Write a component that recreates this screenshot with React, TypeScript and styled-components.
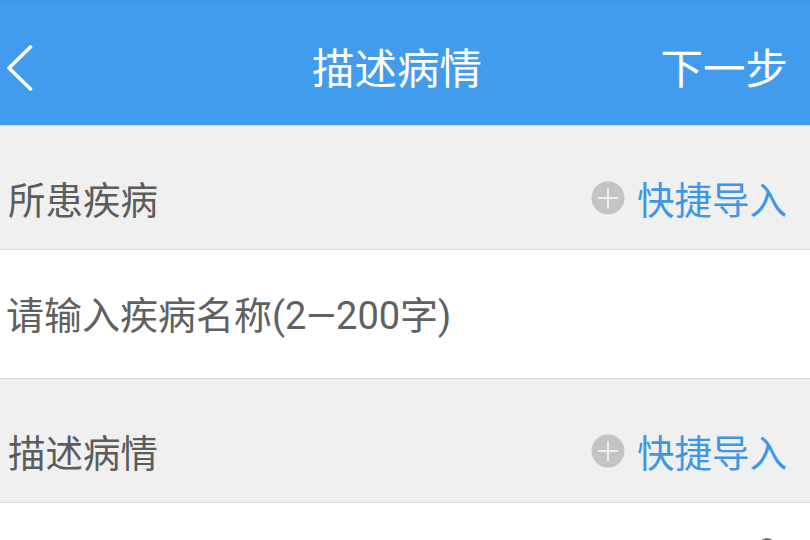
import React from "react";
import styled, { createGlobalStyle } from "styled-components";

const Global = createGlobalStyle`
  html, body { margin: 0; padding: 0; background: #fff; }
  body { font-family: Roboto, "Noto Sans CJK SC", "Liberation Sans", sans-serif; }
`;

const Page = styled.div`
  width: 810px;
  height: 540px;
  overflow: hidden;
  background: #fff;
`;

const Header = styled.header`
  height: 125px;
  box-sizing: border-box;
  padding: 20px 22px 0 6px;
  display: grid;
  grid-template-columns: 1fr auto 1fr;
  align-items: center;
  background: linear-gradient(#3f95e4 0, #429cee 8px);
  color: #fff;
`;

const BackIcon = styled.svg`
  width: 27px;
  height: 48px;
  display: block;
  margin-top: -10px;
`;

const Title = styled.h1`
  margin: -6px 0 0;
  font-size: 42.5px;
  line-height: 60px;
  font-weight: 400;
`;

const NextAction = styled.span`
  margin-top: -6px;
  justify-self: end;
  font-size: 42.5px;
  line-height: 60px;
`;

const SectionBar = styled.div`
  height: 125px;
  box-sizing: border-box;
  padding: 27px 23px 0 8px;
  display: flex;
  align-items: center;
  justify-content: space-between;
  background: #f0f0f1;
  border-top: 1px solid #dcdde0;
  border-bottom: 1px solid #dedede;
`;

const SectionTitle = styled.h2`
  margin: 0;
  font-size: 37.5px;
  line-height: 50px;
  font-weight: 400;
  color: #5c5c5c;
`;

const QuickImport = styled.span`
  display: flex;
  align-items: center;
  gap: 12px;
  font-size: 37.5px;
  line-height: 50px;
  color: #3f97e4;
`;

const PlusIcon = styled.svg`
  width: 34px;
  height: 34px;
  display: block;
  margin-top: -6px;
`;

const InputRow = styled.div`
  height: 128px;
  box-sizing: border-box;
  padding: 4px 6px 0;
  display: flex;
  align-items: center;
  font-size: 38px;
  line-height: 50px;
  color: #606060;
  background: #fff;
`;

const DescriptionArea = styled.div`
  height: 60px;
  box-sizing: border-box;
  padding: 35px 35px 0 0;
  display: flex;
  justify-content: flex-end;
  background: #fff;
`;

const Marker = styled.span`
  width: 16px;
  height: 16px;
  border-radius: 50%;
  background: #777;
`;

const Plus = () => (
  <PlusIcon viewBox="0 0 34 34" aria-hidden="true">
    <circle cx="17" cy="17" r="16.5" fill="#c4c4c4" />
    <path d="M17 7v20M7 17h20" stroke="#efefef" strokeWidth="2" fill="none" />
  </PlusIcon>
);

const Section = ({ title }: { title: string }) => (
  <SectionBar>
    <SectionTitle>{title}</SectionTitle>
    <QuickImport>
      <Plus />
      快捷导入
    </QuickImport>
  </SectionBar>
);

export default function App() {
  return (
    <Page>
      <Global />
      <Header>
        <BackIcon viewBox="0 0 27 48" aria-hidden="true">
          <path
            d="M24.5 3 3 24l21.5 21"
            fill="none"
            stroke="#fff"
            strokeWidth="3.6"
            strokeLinecap="round"
            strokeLinejoin="round"
          />
        </BackIcon>
        <Title>描述病情</Title>
        <NextAction>下一步</NextAction>
      </Header>
      <Section title="所患疾病" />
      <InputRow>请输入疾病名称(2—200字)</InputRow>
      <Section title="描述病情" />
      <DescriptionArea>
        <Marker />
      </DescriptionArea>
    </Page>
  );
}
